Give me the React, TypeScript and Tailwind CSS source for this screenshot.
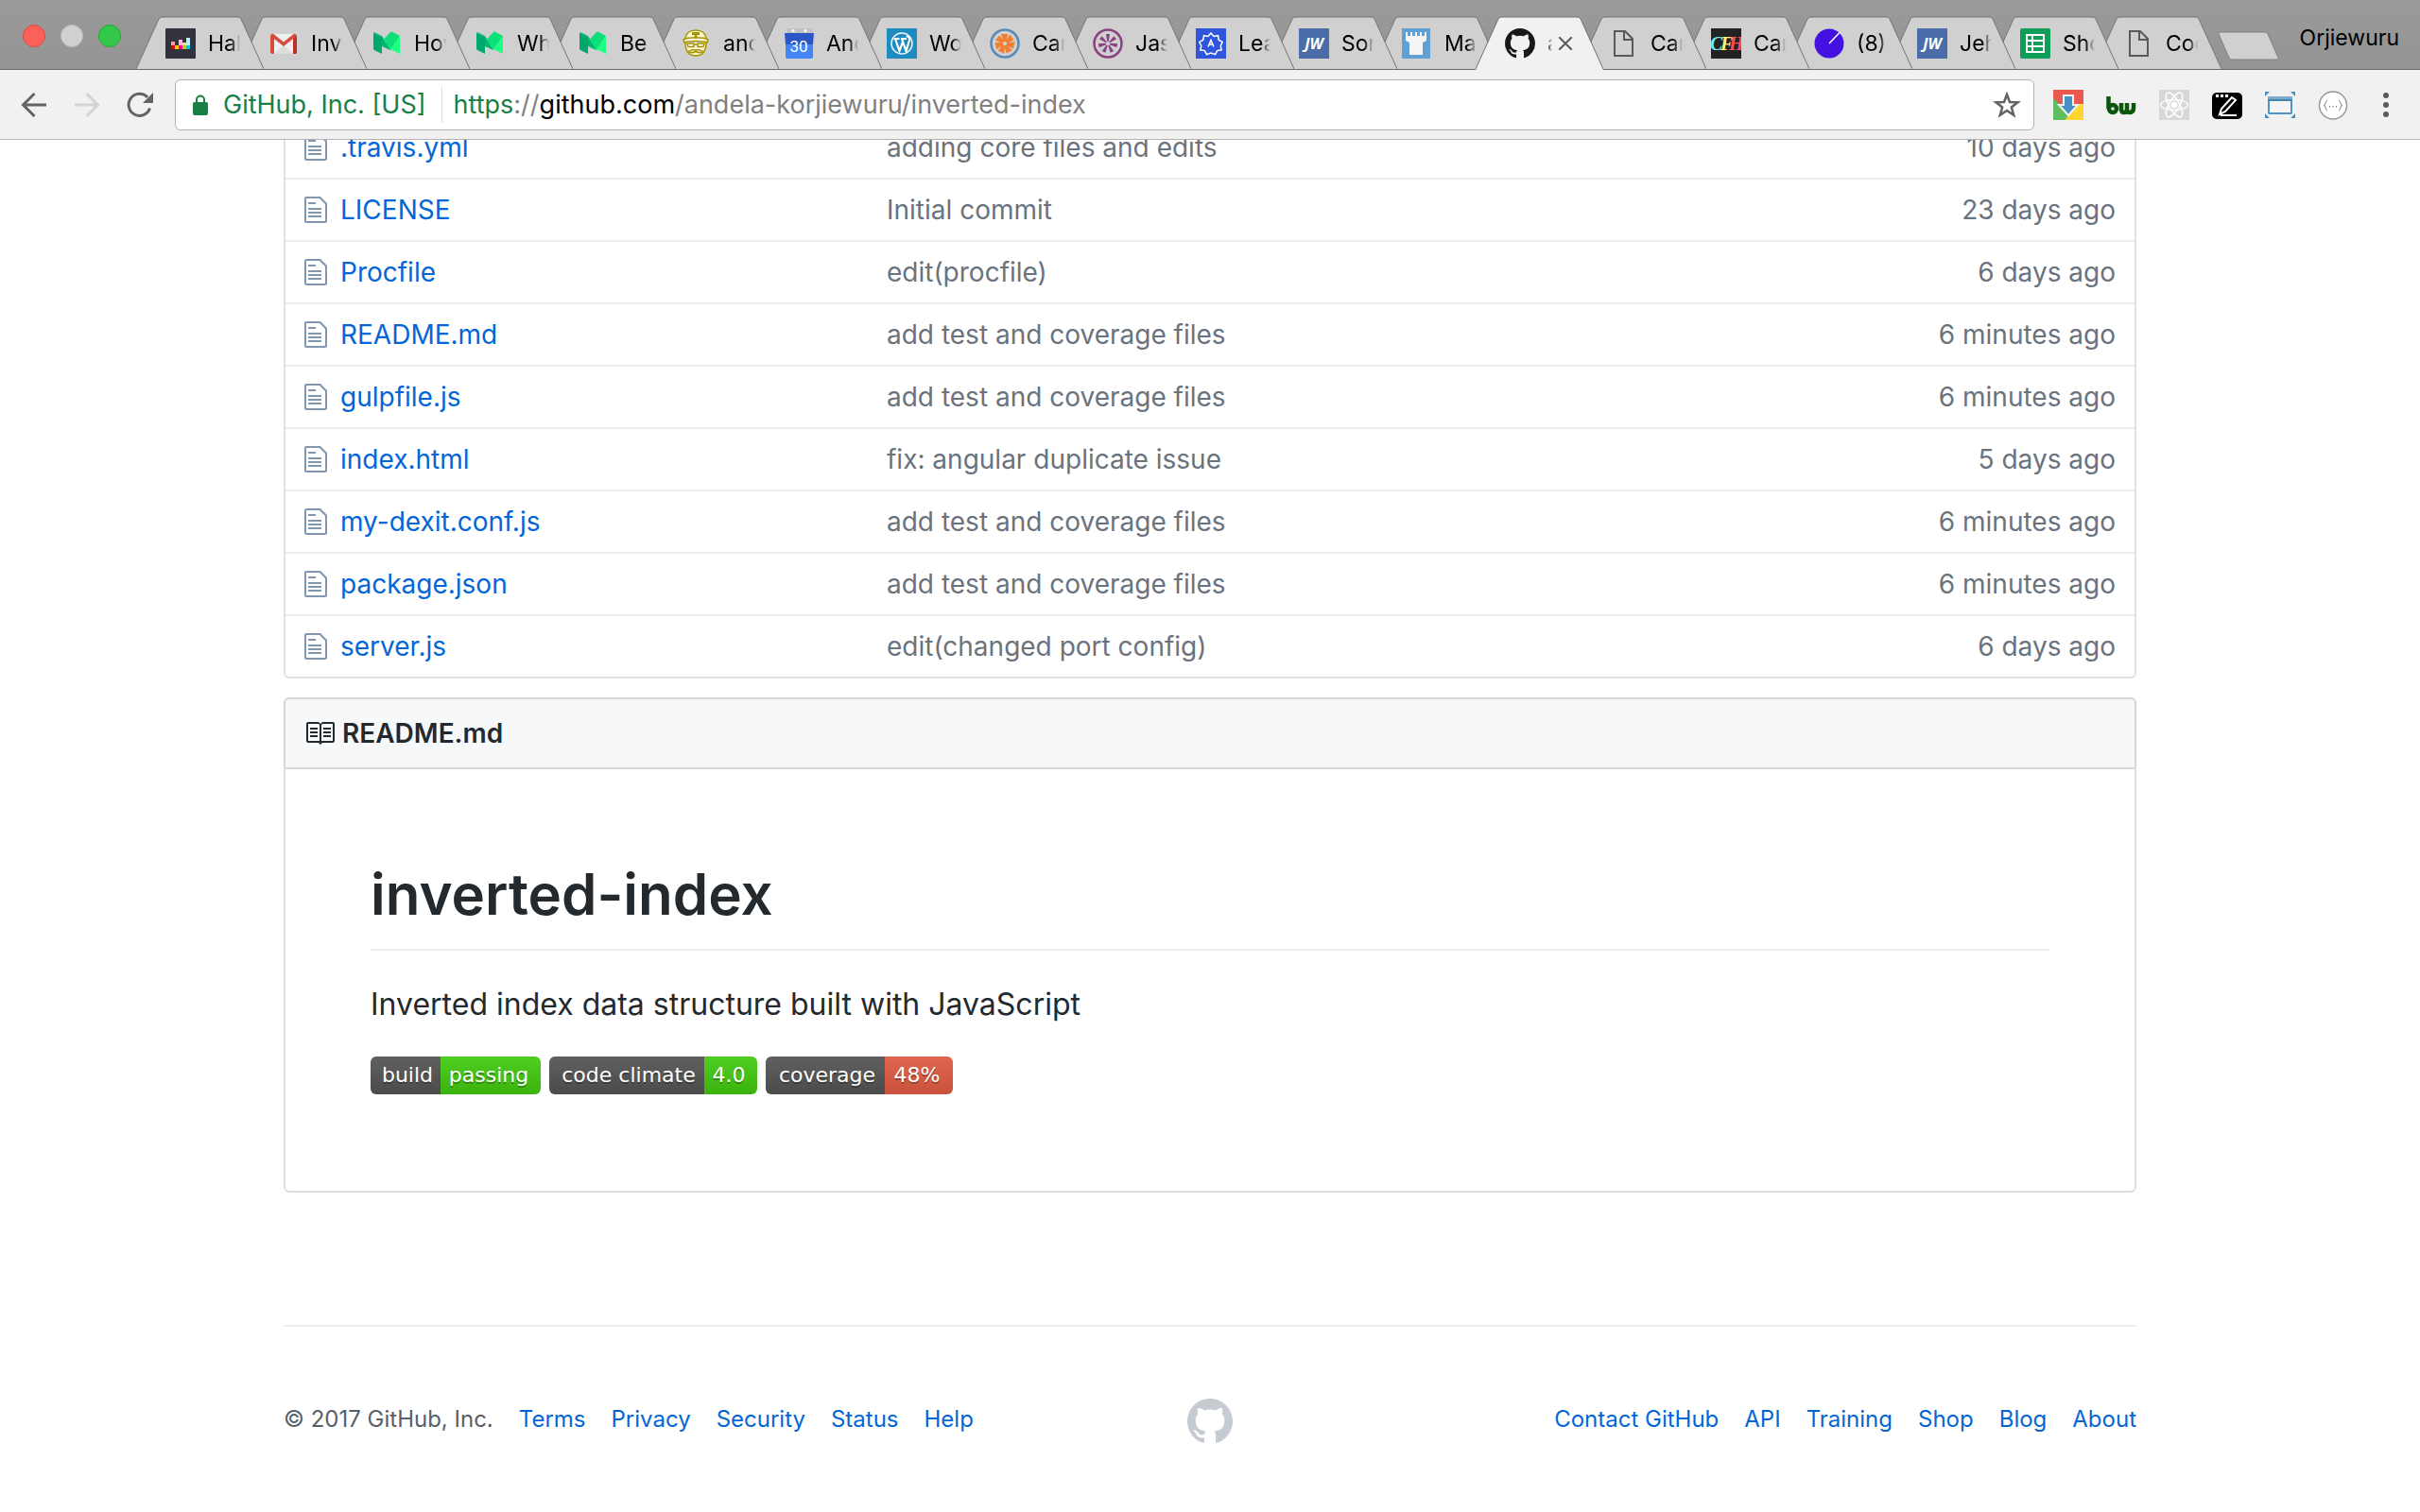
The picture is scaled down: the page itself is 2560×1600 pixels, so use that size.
import type { ReactNode } from "react";

const OCTOCAT =
  "M8 0C3.58 0 0 3.58 0 8c0 3.54 2.29 6.53 5.47 7.59.4.07.55-.17.55-.38 0-.19-.01-.82-.01-1.49-2.01.37-2.53-.49-2.69-.94-.09-.23-.48-.94-.82-1.13-.28-.15-.68-.52-.01-.53.63-.01 1.08.58 1.23.82.72 1.21 1.87.87 2.33.66.07-.52.28-.87.51-1.07-1.78-.2-3.64-.89-3.64-3.95 0-.87.31-1.59.82-2.15-.08-.2-.36-1.02.08-2.12 0 0 .67-.21 2.2.82.64-.18 1.32-.27 2-.27.68 0 1.36.09 2 .27 1.53-1.04 2.2-.82 2.2-.82.44 1.1.16 1.92.08 2.12.51.56.82 1.27.82 2.15 0 3.07-1.87 3.75-3.65 3.95.29.25.54.73.54 1.48 0 1.07-.01 1.93-.01 2.2 0 .21.15.46.55.38A8.013 8.013 0 0 0 16 8c0-4.42-3.58-8-8-8z";

function Icon({ children, box = "0 0 32 32" }: { children: ReactNode; box?: string }) {
  return (
    <svg viewBox={box} className="size-8 shrink-0" fill="none" aria-hidden="true">
      {children}
    </svg>
  );
}

const Mark = () => (
  <Icon box="0 0 16 16">
    <path d={OCTOCAT} fill="#191717" />
  </Icon>
);

const Equalizer = () => (
  <Icon>
    <rect width="32" height="32" rx="1" fill="#32323d" />
    <path d="M6 14h4v4H6z" fill="#ff9e9e" />
    <path d="M6 18h4v4H6z" fill="#e60000" />
    <path d="M10 18h4v4h-4z" fill="#ffd500" />
    <path d="M14 12h4v6h-4z" fill="#ffb6d9" />
    <path d="M14 18h4v4h-4z" fill="#ff0092" />
    <path d="M18 15h4v3h-4z" fill="#d6e88f" />
    <path d="M18 18h4v4h-4z" fill="#b8cc1a" />
    <path d="M22 10h4v8h-4z" fill="#b3f0ff" />
    <path d="M22 18h4v4h-4z" fill="#00c7f2" />
  </Icon>
);

const Gmail = () => (
  <Icon>
    <path d="M2 6h28v21H2z" fill="#efefef" />
    <path d="M6 27 16 17l10 10z" fill="#dcdcdc" />
    <path d="M2 8v17a2 2 0 0 0 2 2h2V11l10 8 10-8v16h2a2 2 0 0 0 2-2V8a2.300 2.300 0 0 0-4-1.500L16 14.500 6 6.500A2.300 2.300 0 0 0 2 8z" fill="#d54b3d" />
    <path d="M26 11v16h2a2 2 0 0 0 2-2V8z" fill="#b93124" />
  </Icon>
);

const Medium = () => (
  <Icon>
    <path d="M2 5 11 9v18l-8-4a2 2 0 0 1-1-2z" fill="#00a86b" />
    <path d="M11 9 20 23l-9-4z" fill="#00c978" />
    <path d="M2 5c0-1 1-1 2-.6l7 3.600 9 15-9-4.500V9z" fill="#00b870" />
    <path d="M20 4q1-.8 2-.3l8 4.300-10 15-7-11.500z" fill="#0be078" />
    <path d="M30 8v19l-10-5z" fill="#1bff82" />
  </Icon>
);

const Travis = () => (
  <Icon>
    <g stroke="#a89400" strokeWidth="1.500" strokeLinejoin="round" strokeLinecap="round">
      <path d="M5 12C5 5 10 2 16 2s11 3 11 10" fill="#fbf6d8" />
      <path d="M5 15c0 8 3 14 11 14s11-6 11-14" fill="#fbf6d8" />
      <path d="M3 12c4-3 22-3 26 0l-1 3c-5-2-19-2-24 0z" fill="#fbf6d8" />
      <path d="M7 16h7v3.500H8zM18 16h7l-1 3.500h-6zM14 17h4" fill="#fff" />
      <path d="M16 23c-4-1-6 1-8 1.500 3 2 5 1.500 8 0 3 1.500 5 2 8 0-2-.500-4-2.500-8-1.500z" fill="#fbf6d8" />
    </g>
    <path d="M12 4h8v3h-2.500v3.500h-3V7H12z" fill="#a89400" />
  </Icon>
);

const Calendar = () => (
  <Icon>
    <path d="M3 0h28v6H3z" fill="#c2c2c2" />
    <circle cx="10" cy="2.500" r="1.500" fill="#fff" />
    <circle cx="23" cy="2.500" r="1.500" fill="#fff" />
    <path d="M1 5h31l-1 12H2z" fill="#2a56c6" />
    <path d="M2 17h29v13a2 2 0 0 1-2 2H4a2 2 0 0 1-2-2z" fill="#4285f4" />
    <text x="16" y="25" textAnchor="middle" fontSize="17" fontFamily="Roboto, sans-serif" fill="#fff">30</text>
  </Icon>
);

const WordPress = () => (
  <Icon>
    <path d="M0 0h32v32H0z" fill="#1e8cbe" />
    <circle cx="16" cy="16" r="11" stroke="#e8f3f8" strokeWidth="1.500" />
    <path d="M7.500 11h6M15 11h6M9 11l4.500 13L17 14l-1-3M17 14l3.500 10 4-13q-2-3-3.500-2" stroke="#fff" strokeWidth="2.200" />
  </Icon>
);

const petals = [0, 51, 103, 154, 206, 257, 309];
const Flower = ({ ring, petal, shape }: { ring: string; petal: string; shape: string }) => (
  <Icon>
    <circle cx="16" cy="16" r="14.500" stroke={ring} strokeWidth="2.500" />
    {petals.map((a) => (
      <path key={a} d={shape} fill={petal} transform={`rotate(${a} 16 16)`} />
    ))}
  </Icon>
);

const Learn = () => (
  <Icon>
    <path d="M0 0h32v32H0z" fill="#2f55dc" />
    <g stroke="#fff" strokeWidth="1.500">
      <path d="m16 5 3 3.500 4.500-.8.700 4.500 4 2.300-2 4 1 4.300-4.500.8-2.200 4L16 26l-4.500 1.600-2.200-4-4.500-.8 1-4.300-2-4 4-2.300.7-4.500 4.500.8z" />
      <path d="m13 19.500 3-7 3 7M14 17h4" />
    </g>
  </Icon>
);

const Jw = () => (
  <Icon>
    <path d="M0 0h32v32H0z" fill="#4a6da7" />
    <text x="16" y="22" textAnchor="middle" fontSize="16" fontWeight="700" fontStyle="italic" fontFamily="Open Sans, sans-serif" fill="#fff">JW</text>
  </Icon>
);

const Tower = () => (
  <Icon>
    <path d="M0 0h30v32H0z" fill="#62a0d2" />
    <path d="M4 4h2v4h3V4h2v4h3V4h2v4h3V4h2v4h3V4h2v9l-4 2v13H8V15l-4-2z" fill="#f5f5f5" />
  </Icon>
);

const Page = () => (
  <Icon>
    <path d="M7 3h11l8 8v18H7zM17 3v9h9" stroke="#5a5a5a" strokeWidth="2" />
  </Icon>
);

const Cfh = () => (
  <Icon>
    <path d="M0 0h32v32H0z" fill="#222" />
    <text y="23" fontSize="20" fontWeight="700" fontStyle="italic" fontFamily="Liberation Serif, serif">
      <tspan x="-1" fill="#6fe8f0">C</tspan>
      <tspan x="10" fill="#fff27a">F</tspan>
      <tspan x="19" fill="#ff4a5a">H</tspan>
    </text>
  </Icon>
);

const Dial = () => (
  <Icon>
    <circle cx="16" cy="16" r="15.500" fill="#4411e0" />
    <path d="M16 16 27 4.500" stroke="#fff" strokeWidth="1.500" />
  </Icon>
);

const Sheets = () => (
  <Icon>
    <rect width="32" height="32" rx="2" fill="#0f9d58" />
    <path d="M7 7h18v18H7zM7 13h18M7 19h18M13 7v18" stroke="#fff" strokeWidth="2" />
  </Icon>
);

const tabs: { title: string; icon: ReactNode; active?: boolean }[] = [
  { title: "Hal", icon: <Equalizer /> },
  { title: "Invi", icon: <Gmail /> },
  { title: "How", icon: <Medium /> },
  { title: "Wh", icon: <Medium /> },
  { title: "Be", icon: <Medium /> },
  { title: "and", icon: <Travis /> },
  { title: "And", icon: <Calendar /> },
  { title: "Wo", icon: <WordPress /> },
  { title: "Car", icon: <Flower ring="#5a8ab8" petal="#f08030" shape="M15 14 12 6l7 0-1 8z" /> },
  { title: "Jas", icon: <Flower ring="#8a4182" petal="#8a4182" shape="M15.300 14 14 6h4l-1.300 8z" /> },
  { title: "Lea", icon: <Learn /> },
  { title: "Sor", icon: <Jw /> },
  { title: "Ma", icon: <Tower /> },
  { title: "a", icon: <Mark />, active: true },
  { title: "Can", icon: <Page /> },
  { title: "Car", icon: <Cfh /> },
  { title: "(8)", icon: <Dial /> },
  { title: "Jeh", icon: <Jw /> },
  { title: "Sho", icon: <Sheets /> },
  { title: "Coo", icon: <Page /> },
];

function Tab({ title, icon, active, order }: { title: string; icon: ReactNode; active?: boolean; order: number }) {
  return (
    <div className="relative -mr-[26px] h-[57px] w-[135px] shrink-0" style={{ zIndex: active ? tabs.length + 1 : order }}>
      <svg viewBox="0 0 135 57" className="absolute inset-0 size-full" fill="none" aria-hidden="true">
        <path
          d={active ? "M0 57 24 3Q25 1 28 1H107Q110 1 111 3L135 57Z" : "M0 56 24 3Q25 1 28 1H107Q110 1 111 3L135 56Z"}
          fill={active ? "#f1f1f1" : "#d0d0d0"}
        />
        <path d="M0 56 24 3Q25 1 28 1H107Q110 1 111 3L135 56" stroke="#757575" />
      </svg>
      <div className="relative flex h-[58px] items-center pl-[31px]">
        <button type="button" className="flex items-center gap-[13px]">
          {icon}
          <span
            className={
              active
                ? "w-[5px] overflow-hidden bg-gradient-to-r from-black to-transparent bg-clip-text text-left text-[23px] leading-8 text-transparent"
                : "w-[34px] overflow-hidden bg-gradient-to-r from-black from-70% to-transparent bg-clip-text text-left text-[23px] leading-8 whitespace-nowrap text-transparent"
            }
          >
            {title}
          </span>
        </button>
        {active && (
          <button type="button" aria-label="Close tab" className="ml-[7px]">
            <svg viewBox="0 0 14 14" className="size-3.5" stroke="#5a5a5a" strokeWidth="2" aria-hidden="true">
              <path d="m0 0 14 14M14 0 0 14" />
            </svg>
          </button>
        )}
      </div>
    </div>
  );
}

function TabStrip() {
  return (
    <header className="flex h-[74px] items-start bg-gradient-to-b from-[#9a9a9a] to-[#949494] pr-[22px] pl-6 shadow-[inset_0_-1px_0_#6b6b6b]">
      <div className="flex w-30 shrink-0 gap-4 pt-[26px]">
        <button type="button" aria-label="Close window" className="size-6 rounded-full border border-[#e2463f] bg-[#fc605b]" />
        <button type="button" aria-label="Minimize window" className="size-6 rounded-full border border-[#bdbdbd] bg-[#d0d0d0]" />
        <button type="button" aria-label="Zoom window" className="size-6 rounded-full border border-[#24a732] bg-[#34c84a]" />
      </div>
      <nav aria-label="Tabs" className="isolate flex items-start pt-[17px] pr-[26px]">
        {tabs.map((t, i) => (
          <Tab key={i} {...t} order={tabs.length - i} />
        ))}
      </nav>
      <button type="button" aria-label="New tab" className="-ml-1 pt-[33px]">
        <svg viewBox="0 0 66 31" className="h-[31px] w-[66px]" aria-hidden="true">
          <path d="M3 1H50Q52 1 53 3L64 28Q65 30 62 30H16Q13 30 12 28L1 3Q0 1 3 1Z" fill="#d0d0d0" stroke="#818181" />
        </svg>
      </button>
      <button type="button" className="ml-auto pt-6 text-[23px] leading-8 text-black">Orjiewuru</button>
    </header>
  );
}

const extensions: { label: string; icon: ReactNode }[] = [
  {
    label: "Downloads",
    icon: (
      <Icon>
        <path d="M0 0h32v16L16 32 0 10z" fill="#ea5850" />
        <path d="M0 9v23h13l5-6z" fill="#5fbf60" />
        <path d="M32 15v17H13l9-17z" fill="#ffd62f" />
        <path d="M11 6h10v10h5L16 27 6 16h5z" fill="#4690c4" stroke="#f3f3f3" strokeWidth="2" />
      </Icon>
    ),
  },
  {
    label: "BuiltWith",
    icon: (
      <Icon>
        <g stroke="#0a560a" strokeWidth="4.500" strokeLinejoin="round">
          <path d="M2.500 7v13" />
          <circle cx="7" cy="20" r="4" />
          <path d="M16 14v7q0 3 3 3t3-3v-7M22 21q0 3 3 3 4 0 4-5v-5" />
        </g>
      </Icon>
    ),
  },
  {
    label: "React Developer Tools",
    icon: (
      <Icon>
        <path d="M0 0h32v32H0z" fill="#d7d7d7" />
        <g stroke="#fff" strokeWidth="1.500">
          <ellipse cx="16" cy="16" rx="14.500" ry="5.500" />
          <ellipse cx="16" cy="16" rx="14.500" ry="5.500" transform="rotate(60 16 16)" />
          <ellipse cx="16" cy="16" rx="14.500" ry="5.500" transform="rotate(120 16 16)" />
        </g>
        <circle cx="16" cy="16" r="3.500" fill="#fff" />
      </Icon>
    ),
  },
  {
    label: "Notes",
    icon: (
      <Icon>
        <rect y="3" width="32" height="28" rx="5" fill="#000" />
        <path d="M4 5h3v3H4zM9 5h3v3H9zM14 5h3v3h-3z" fill="#fff" />
        <path d="m8 26 2-6L21 8l4 3-11 12zM9 27h17" stroke="#fff" strokeWidth="2" />
      </Icon>
    ),
  },
  {
    label: "Window resizer",
    icon: (
      <Icon>
        <path d="M0 2h5L0 7zM32 2v5l-5-5zM0 30v-5l5 5zM32 30h-5l5-5z" fill="#4a90bf" />
        <rect x="4" y="8" width="24" height="17" rx="1" fill="#f5f5f5" stroke="#4a96c9" strokeWidth="2" />
        <path d="M3 7h26v4H3z" fill="#7fa9c9" />
        <path d="M3 10h26v2H3z" fill="#3f86b5" />
      </Icon>
    ),
  },
  {
    label: "JSON formatter",
    icon: (
      <Icon>
        <circle cx="16" cy="16.500" r="14.500" fill="#fff" stroke="#9a9a9a" strokeWidth="1.500" />
        <path d="M10 11.500q-2 0-2 2.500t-2 2.500q2 0 2 2.500t2 2.500M22 11.500q2 0 2 2.500t2 2.500q-2 0-2 2.500t-2 2.500" stroke="#888" />
        <path d="M12 17h1v1.500h-1zM15.500 17h1v1.500h-1zM19 17h1v1.500h-1z" fill="#777" />
      </Icon>
    ),
  },
];

function Toolbar() {
  return (
    <div className="relative z-10 flex h-[74px] items-center border-b border-[#b3b3b3] bg-[#f1f1f1] pr-5 pl-5">
      <div className="flex w-[165px] shrink-0 items-center gap-6">
        <button type="button" aria-label="Back">
          <svg viewBox="0 0 32 32" className="size-8" fill="none" stroke="#636363" strokeWidth="3" aria-hidden="true">
            <path d="M29 16H5M16.500 4 4.500 16l12 12" />
          </svg>
        </button>
        <button type="button" aria-label="Forward" disabled>
          <svg viewBox="0 0 32 32" className="size-8" fill="none" stroke="#d4d4d4" strokeWidth="3" aria-hidden="true">
            <path d="M3 16h24M15.500 4l12 12-12 12" />
          </svg>
        </button>
        <button type="button" aria-label="Reload">
          <svg viewBox="0 0 32 32" className="size-8" fill="none" stroke="#636363" strokeWidth="3" aria-hidden="true">
            <path d="M26.500 19.500A11.500 11.500 0 1 1 24 8" />
            <path d="M30 3v11H19z" fill="#636363" stroke="none" />
          </svg>
        </button>
      </div>
      <div className="flex h-[54px] flex-1 items-center rounded-md border border-[#b3b3b3] bg-white pr-[13px] pl-[18px] text-[27px] leading-9">
        <button type="button" className="flex items-center gap-4 text-[#188045]">
          <svg viewBox="0 0 16 22" className="h-[22px] w-4" fill="none" aria-hidden="true">
            <rect y="8" width="16" height="14" rx="2" fill="#188045" />
            <path d="M4 9V5.500a4 4 0 0 1 8 0V9" stroke="#188045" strokeWidth="2" />
          </svg>
          GitHub, Inc. [US]
        </button>
        <span className="mr-3 ml-4 h-[39px] w-px bg-[#dedede]" />
        <div
          role="textbox"
          aria-label="Address"
          contentEditable
          suppressContentEditableWarning
          className="min-w-0 flex-1 whitespace-nowrap text-[#808080] outline-none"
        >
          <span className="text-[#188045]">https</span>://<span className="text-black">github.com</span>/andela-korjiewuru/inverted-index
        </div>
        <button type="button" aria-label="Bookmark this page">
          <svg viewBox="0 0 30 30" className="size-[30px]" fill="none" stroke="#636363" strokeWidth="2.500" aria-hidden="true">
            <path d="m15 4 3 8 8.500.3-6.700 5.200 2.400 8.200-7.200-4.800-7.200 4.800 2.400-8.200-6.700-5.200L12 12z" />
          </svg>
        </button>
      </div>
      <div className="flex items-center gap-6 pl-5">
        {extensions.map((e) => (
          <button key={e.label} type="button" aria-label={e.label}>
            {e.icon}
          </button>
        ))}
        <button type="button" aria-label="Menu">
          <svg viewBox="0 0 32 32" className="size-8" fill="#5a5a5a" aria-hidden="true">
            <circle cx="16" cy="6" r="3" />
            <circle cx="16" cy="16" r="3" />
            <circle cx="16" cy="26" r="3" />
          </svg>
        </button>
      </div>
    </div>
  );
}

const files = [
  [".travis.yml", "adding core files and edits", "10 days ago"],
  ["LICENSE", "Initial commit", "23 days ago"],
  ["Procfile", "edit(procfile)", "6 days ago"],
  ["README.md", "add test and coverage files", "6 minutes ago"],
  ["gulpfile.js", "add test and coverage files", "6 minutes ago"],
  ["index.html", "fix: angular duplicate issue", "5 days ago"],
  ["my-dexit.conf.js", "add test and coverage files", "6 minutes ago"],
  ["package.json", "add test and coverage files", "6 minutes ago"],
  ["server.js", "edit(changed port config)", "6 days ago"],
];

function FileTable() {
  return (
    <div className="-mt-[26px] rounded-b-md border-2 border-t-0 border-[#dfe2e5]">
      <table className="w-full border-collapse text-[28px] leading-10 text-[#6a737d]">
        <tbody>
          {files.map(([name, message, age]) => (
            <tr key={name} className="h-[66px] shadow-[inset_0_2px_0_#eaecef]">
              <td className="w-[636px] pt-0.5 pl-5">
                <a href="#" className="flex items-center gap-3.5 text-[#0366d6]">
                  <svg viewBox="0 0 12 16" className="h-8 w-6" fill="#8197b0" aria-hidden="true">
                    <path d="M6 5H2V4h4v1zM2 8h7V7H2v1zm0 2h7V9H2v1zm0 2h7v-1H2v1zm10-7.500V14c0 .55-.45 1-1 1H1c-.55 0-1-.45-1-1V2c0-.55.45-1 1-1h7.500L12 4.500zM11 5L8 2H1v12h10V5z" />
                  </svg>
                  {name}
                </a>
              </td>
              <td className="pt-0.5">{message}</td>
              <td className="pt-0.5 pr-5 text-right">{age}</td>
            </tr>
          ))}
        </tbody>
      </table>
    </div>
  );
}

const badges = [
  { label: "build", value: "passing", left: "w-[74px]", right: "w-[106px] from-[#4fce20] to-[#3bb30d]" },
  { label: "code climate", value: "4.0", left: "w-[164px]", right: "w-14 from-[#4fce20] to-[#3bb30d]" },
  { label: "coverage", value: "48%", left: "w-[126px]", right: "w-[72px] from-[#e0664f] to-[#c9523c]" },
];

function Readme() {
  return (
    <article className="mt-5 rounded-md border-2 border-[#dddddd]">
      <h2 className="-mx-0.5 -mt-0.5 flex h-[76px] items-center gap-2 rounded-t-md border-2 border-[#d4d7da] bg-[#f6f8fa] pl-5 text-[28px] font-semibold text-[#24292e]">
        <svg viewBox="0 0 16 16" className="size-8" fill="#24292e" aria-hidden="true">
          <path d="M3 5h4v1H3V5zm0 3h4V7H3v1zm0 2h4V9H3v1zm11-5h-4v1h4V5zm0 2h-4v1h4V7zm0 2h-4v1h4V9zm2-6v9c0 .55-.45 1-1 1H9.500l-1 1-1-1H2c-.55 0-1-.45-1-1V3c0-.55.45-1 1-1h5.500l1 1 1-1H15c.55 0 1 .45 1 1zm-8 .5L7.500 3H2v9h6V3.500zm7-.5H9.500l-.5.5V12h6V3z" />
        </svg>
        README.md
      </h2>
      <div className="px-[90px] pt-[90px] pb-[102px] text-[#24292e]">
        <h1 className="mb-8 border-b-2 border-[#eaecef] pb-4 text-[60px] leading-[84px] font-semibold">inverted-index</h1>
        <p className="mb-[30px] text-[32px] leading-[50px]">Inverted index data structure built with JavaScript</p>
        <div className="flex gap-[9px]">
          {badges.map((b) => (
            <a
              key={b.label}
              href="#"
              className="flex h-10 overflow-hidden rounded-md font-['DejaVu_Sans',sans-serif] text-[22px] leading-10 text-white [text-shadow:0_2px_0_#0000004d]"
            >
              <span className={`${b.left} bg-gradient-to-b from-[#606060] to-[#4b4b4b] pl-1 text-center`}>{b.label}</span>
              <span className={`${b.right} bg-gradient-to-b pr-1 text-center`}>{b.value}</span>
            </a>
          ))}
        </div>
      </div>
    </article>
  );
}

function Footer() {
  return (
    <footer className="mt-[140px] grid grid-cols-[1fr_auto_1fr] items-start border-t-2 border-[#eaecef] pt-[76px] text-2xl leading-[44px] text-[#586069]">
      <div className="flex gap-[27px]">
        <span>© 2017 GitHub, Inc.</span>
        {["Terms", "Privacy", "Security", "Status", "Help"].map((l) => (
          <a key={l} href="#" className="text-[#0366d6]">{l}</a>
        ))}
      </div>
      <a href="#" aria-label="GitHub">
        <svg viewBox="0 0 16 16" className="size-12" fill="#c6cbd1" aria-hidden="true">
          <path d={OCTOCAT} />
        </svg>
      </a>
      <div className="flex justify-end gap-[27px]">
        {["Contact GitHub", "API", "Training", "Shop", "Blog", "About"].map((l) => (
          <a key={l} href="#" className="text-[#0366d6]">{l}</a>
        ))}
      </div>
    </footer>
  );
}

export default function App() {
  return (
    <div className="flex h-screen flex-col overflow-hidden bg-white font-[Inter,sans-serif]">
      <TabStrip />
      <Toolbar />
      <main className="mx-auto min-h-0 w-full max-w-[1960px] flex-1 overflow-hidden">
        <FileTable />
        <Readme />
        <Footer />
      </main>
    </div>
  );
}
